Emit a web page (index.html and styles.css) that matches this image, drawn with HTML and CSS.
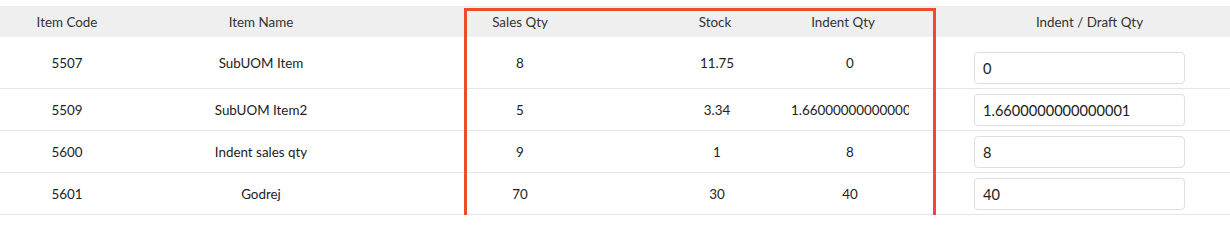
FILE: index.html
```html
<!DOCTYPE html>
<html>
<head>
<meta charset="utf-8">
<link rel="stylesheet" href="styles.css">
</head>
<body>
<div class="wrap">
  <table class="grid">
    <colgroup>
      <col class="c1"><col class="c2"><col class="c3"><col class="c4"><col class="c5"><col class="c6">
    </colgroup>
    <thead>
      <tr>
        <th>Item Code</th>
        <th>Item Name</th>
        <th>Sales Qty</th>
        <th>Stock</th>
        <th class="ind">Indent Qty</th>
        <th class="draft">Indent / Draft Qty</th>
      </tr>
    </thead>
    <tbody>
      <tr class="first">
        <td>5507</td><td>SubUOM Item</td><td>8</td><td class="stock">11.75</td>
        <td class="ind"><div class="clip">0</div></td>
        <td class="draft"><input class="qty" type="text" value="0"></td>
      </tr>
      <tr>
        <td>5509</td><td>SubUOM Item2</td><td>5</td><td class="stock">3.34</td>
        <td class="ind"><div class="clip">1.6600000000000001</div></td>
        <td class="draft"><input class="qty" type="text" value="1.6600000000000001"></td>
      </tr>
      <tr>
        <td>5600</td><td>Indent sales qty</td><td>9</td><td class="stock">1</td>
        <td class="ind"><div class="clip">8</div></td>
        <td class="draft"><input class="qty" type="text" value="8"></td>
      </tr>
      <tr>
        <td>5601</td><td>Godrej</td><td>70</td><td class="stock">30</td>
        <td class="ind"><div class="clip">40</div></td>
        <td class="draft"><input class="qty" type="text" value="40"></td>
      </tr>
    </tbody>
  </table>
  <div class="highlight"></div>
</div>
</body>
</html>
```

FILE: styles.css
```css
* { box-sizing: border-box; }
html, body { margin: 0; padding: 0; background: #fff; }
body {
  font-family: Lato, "Open Sans", Arial, sans-serif;
  font-size: 13.4px;
  color: #222;
}
.wrap {
  position: relative;
  width: 1230px;
  padding-top: 6px;
}
.grid {
  width: 1230px;
  border-collapse: collapse;
  table-layout: fixed;
}
.c1 { width: 134px; }
.c2 { width: 254px; }
.c3 { width: 264px; }
.c4 { width: 126px; }
.c5 { width: 142px; }
.c6 { width: 310px; }
th {
  background: #efefef;
  height: 31px;
  font-weight: 400;
  color: #333;
  text-align: center;
  padding: 0;
}
td {
  text-align: center;
  vertical-align: middle;
  padding: 5px 0 4px;
  border-bottom: 1px solid #e6e6e6;
  line-height: 16px;
}
tr.first td.draft { padding-top: 15px; }
td.stock { padding-left: 4px; }
th.ind { padding: 0 24px 0 12px; }
td.ind { padding-left: 13px; padding-right: 11px; }
.clip {
  overflow: hidden;
  white-space: nowrap;
  text-align: center;
}
th.draft { padding: 0 25px 0 54px; }
td.draft { padding-left: 54px; text-align: left; }
.qty {
  display: block;
  width: 211px;
  height: 32px;
  border: 1px solid #dedede;
  border-radius: 4px;
  padding: 0 8px;
  font-family: Lato, "Open Sans", Arial, sans-serif;
  font-size: 14.6px;
  color: #222;
  background: #fff;
  outline: none;
}
.highlight {
  position: absolute;
  left: 464px;
  top: 8px;
  width: 472px;
  height: 214px;
  border: 3px solid #ee4a2c;
  pointer-events: none;
}
```
